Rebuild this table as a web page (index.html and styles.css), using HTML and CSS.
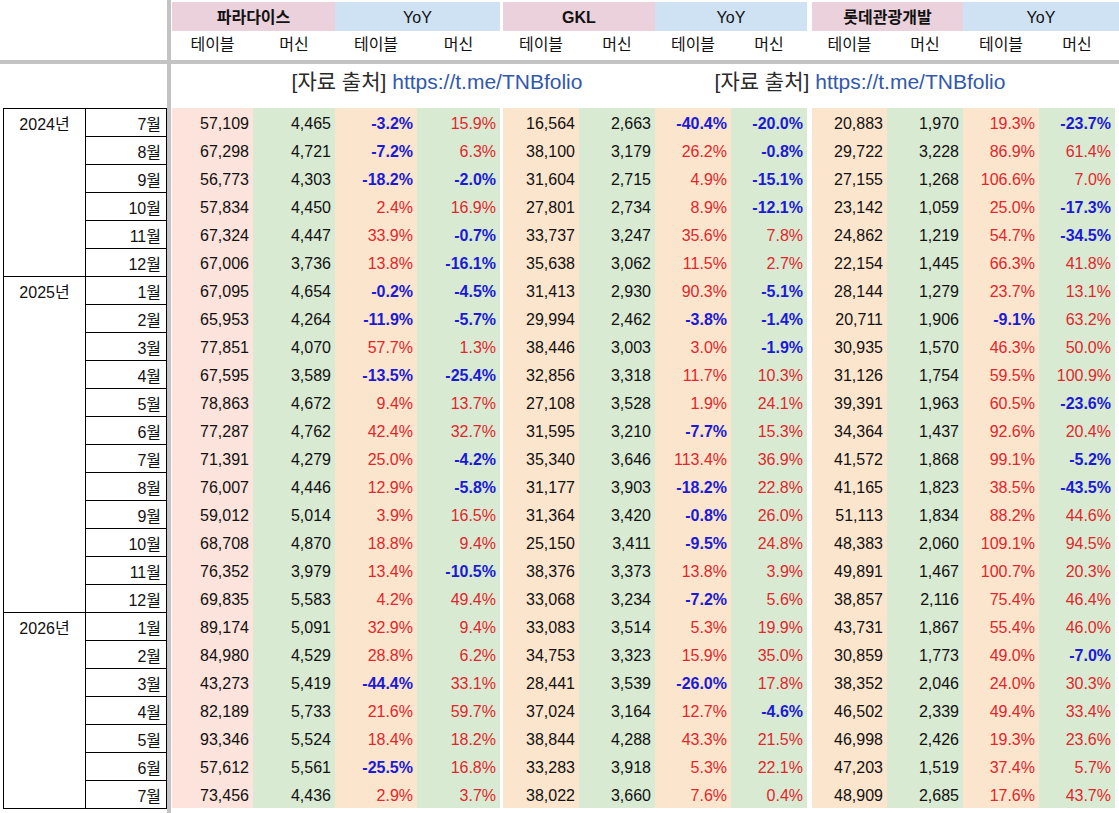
FILE: index.html
```html
<!DOCTYPE html>
<html lang="ko">
<head>
<meta charset="utf-8">
<title>카지노 드롭액</title>
<link rel="stylesheet" href="styles.css">
</head>
<body>
<div class="sheet">
  <div class="vbar"></div>
  <div class="hbar"></div>

  <div class="head">
    <div class="cols h1">
      <span class="pk g1">파라다이스</span>
      <span class="bl g2">YoY</span>
      <span class="pk g3">GKL</span>
      <span class="bl g4">YoY</span>
      <span class="pk g5">롯데관광개발</span>
      <span class="bl g6">YoY</span>
    </div>
    <div class="cols h2 r12">
      <span>테이블</span><span>머신</span><span>테이블</span><span>머신</span>
      <span>테이블</span><span>머신</span><span>테이블</span><span>머신</span>
      <span>테이블</span><span>머신</span><span>테이블</span><span>머신</span>
    </div>
  </div>

  <div class="source">
    <p class="src src-a"><span class="src-k">[자료 출처]</span> <span class="src-u">https://t.me/TNBfolio</span></p>
    <p class="src src-b"><span class="src-k">[자료 출처]</span> <span class="src-u">https://t.me/TNBfolio</span></p>
  </div>

  <div class="side">
    <div class="yr y24">2024년</div>
    <div class="mo">7월</div><div class="mo">8월</div><div class="mo">9월</div><div class="mo">10월</div><div class="mo">11월</div><div class="mo">12월</div>
    <div class="yr y25">2025년</div>
    <div class="mo">1월</div><div class="mo">2월</div><div class="mo">3월</div><div class="mo">4월</div><div class="mo">5월</div><div class="mo">6월</div>
    <div class="mo">7월</div><div class="mo">8월</div><div class="mo">9월</div><div class="mo">10월</div><div class="mo">11월</div><div class="mo">12월</div>
    <div class="yr y26">2026년</div>
    <div class="mo">1월</div><div class="mo">2월</div><div class="mo">3월</div><div class="mo">4월</div><div class="mo">5월</div><div class="mo">6월</div>
    <div class="mo last">7월</div>
  </div>

  <div class="data">
    <div class="cols r12 row"><span>57,109</span><span>4,465</span><span class="dn">-3.2%</span><span class="up">15.9%</span><span>16,564</span><span>2,663</span><span class="dn">-40.4%</span><span class="dn">-20.0%</span><span>20,883</span><span>1,970</span><span class="up">19.3%</span><span class="dn">-23.7%</span></div>
    <div class="cols r12 row"><span>67,298</span><span>4,721</span><span class="dn">-7.2%</span><span class="up">6.3%</span><span>38,100</span><span>3,179</span><span class="up">26.2%</span><span class="dn">-0.8%</span><span>29,722</span><span>3,228</span><span class="up">86.9%</span><span class="up">61.4%</span></div>
    <div class="cols r12 row"><span>56,773</span><span>4,303</span><span class="dn">-18.2%</span><span class="dn">-2.0%</span><span>31,604</span><span>2,715</span><span class="up">4.9%</span><span class="dn">-15.1%</span><span>27,155</span><span>1,268</span><span class="up">106.6%</span><span class="up">7.0%</span></div>
    <div class="cols r12 row"><span>57,834</span><span>4,450</span><span class="up">2.4%</span><span class="up">16.9%</span><span>27,801</span><span>2,734</span><span class="up">8.9%</span><span class="dn">-12.1%</span><span>23,142</span><span>1,059</span><span class="up">25.0%</span><span class="dn">-17.3%</span></div>
    <div class="cols r12 row"><span>67,324</span><span>4,447</span><span class="up">33.9%</span><span class="dn">-0.7%</span><span>33,737</span><span>3,247</span><span class="up">35.6%</span><span class="up">7.8%</span><span>24,862</span><span>1,219</span><span class="up">54.7%</span><span class="dn">-34.5%</span></div>
    <div class="cols r12 row"><span>67,006</span><span>3,736</span><span class="up">13.8%</span><span class="dn">-16.1%</span><span>35,638</span><span>3,062</span><span class="up">11.5%</span><span class="up">2.7%</span><span>22,154</span><span>1,445</span><span class="up">66.3%</span><span class="up">41.8%</span></div>
    <div class="cols r12 row"><span>67,095</span><span>4,654</span><span class="dn">-0.2%</span><span class="dn">-4.5%</span><span>31,413</span><span>2,930</span><span class="up">90.3%</span><span class="dn">-5.1%</span><span>28,144</span><span>1,279</span><span class="up">23.7%</span><span class="up">13.1%</span></div>
    <div class="cols r12 row"><span>65,953</span><span>4,264</span><span class="dn">-11.9%</span><span class="dn">-5.7%</span><span>29,994</span><span>2,462</span><span class="dn">-3.8%</span><span class="dn">-1.4%</span><span>20,711</span><span>1,906</span><span class="dn">-9.1%</span><span class="up">63.2%</span></div>
    <div class="cols r12 row"><span>77,851</span><span>4,070</span><span class="up">57.7%</span><span class="up">1.3%</span><span>38,446</span><span>3,003</span><span class="up">3.0%</span><span class="dn">-1.9%</span><span>30,935</span><span>1,570</span><span class="up">46.3%</span><span class="up">50.0%</span></div>
    <div class="cols r12 row"><span>67,595</span><span>3,589</span><span class="dn">-13.5%</span><span class="dn">-25.4%</span><span>32,856</span><span>3,318</span><span class="up">11.7%</span><span class="up">10.3%</span><span>31,126</span><span>1,754</span><span class="up">59.5%</span><span class="up">100.9%</span></div>
    <div class="cols r12 row"><span>78,863</span><span>4,672</span><span class="up">9.4%</span><span class="up">13.7%</span><span>27,108</span><span>3,528</span><span class="up">1.9%</span><span class="up">24.1%</span><span>39,391</span><span>1,963</span><span class="up">60.5%</span><span class="dn">-23.6%</span></div>
    <div class="cols r12 row"><span>77,287</span><span>4,762</span><span class="up">42.4%</span><span class="up">32.7%</span><span>31,595</span><span>3,210</span><span class="dn">-7.7%</span><span class="up">15.3%</span><span>34,364</span><span>1,437</span><span class="up">92.6%</span><span class="up">20.4%</span></div>
    <div class="cols r12 row"><span>71,391</span><span>4,279</span><span class="up">25.0%</span><span class="dn">-4.2%</span><span>35,340</span><span>3,646</span><span class="up">113.4%</span><span class="up">36.9%</span><span>41,572</span><span>1,868</span><span class="up">99.1%</span><span class="dn">-5.2%</span></div>
    <div class="cols r12 row"><span>76,007</span><span>4,446</span><span class="up">12.9%</span><span class="dn">-5.8%</span><span>31,177</span><span>3,903</span><span class="dn">-18.2%</span><span class="up">22.8%</span><span>41,165</span><span>1,823</span><span class="up">38.5%</span><span class="dn">-43.5%</span></div>
    <div class="cols r12 row"><span>59,012</span><span>5,014</span><span class="up">3.9%</span><span class="up">16.5%</span><span>31,364</span><span>3,420</span><span class="dn">-0.8%</span><span class="up">26.0%</span><span>51,113</span><span>1,834</span><span class="up">88.2%</span><span class="up">44.6%</span></div>
    <div class="cols r12 row"><span>68,708</span><span>4,870</span><span class="up">18.8%</span><span class="up">9.4%</span><span>25,150</span><span>3,411</span><span class="dn">-9.5%</span><span class="up">24.8%</span><span>48,383</span><span>2,060</span><span class="up">109.1%</span><span class="up">94.5%</span></div>
    <div class="cols r12 row"><span>76,352</span><span>3,979</span><span class="up">13.4%</span><span class="dn">-10.5%</span><span>38,376</span><span>3,373</span><span class="up">13.8%</span><span class="up">3.9%</span><span>49,891</span><span>1,467</span><span class="up">100.7%</span><span class="up">20.3%</span></div>
    <div class="cols r12 row"><span>69,835</span><span>5,583</span><span class="up">4.2%</span><span class="up">49.4%</span><span>33,068</span><span>3,234</span><span class="dn">-7.2%</span><span class="up">5.6%</span><span>38,857</span><span>2,116</span><span class="up">75.4%</span><span class="up">46.4%</span></div>
    <div class="cols r12 row"><span>89,174</span><span>5,091</span><span class="up">32.9%</span><span class="up">9.4%</span><span>33,083</span><span>3,514</span><span class="up">5.3%</span><span class="up">19.9%</span><span>43,731</span><span>1,867</span><span class="up">55.4%</span><span class="up">46.0%</span></div>
    <div class="cols r12 row"><span>84,980</span><span>4,529</span><span class="up">28.8%</span><span class="up">6.2%</span><span>34,753</span><span>3,323</span><span class="up">15.9%</span><span class="up">35.0%</span><span>30,859</span><span>1,773</span><span class="up">49.0%</span><span class="dn">-7.0%</span></div>
    <div class="cols r12 row"><span>43,273</span><span>5,419</span><span class="dn">-44.4%</span><span class="up">33.1%</span><span>28,441</span><span>3,539</span><span class="dn">-26.0%</span><span class="up">17.8%</span><span>38,352</span><span>2,046</span><span class="up">24.0%</span><span class="up">30.3%</span></div>
    <div class="cols r12 row"><span>82,189</span><span>5,733</span><span class="up">21.6%</span><span class="up">59.7%</span><span>37,024</span><span>3,164</span><span class="up">12.7%</span><span class="dn">-4.6%</span><span>46,502</span><span>2,339</span><span class="up">49.4%</span><span class="up">33.4%</span></div>
    <div class="cols r12 row"><span>93,346</span><span>5,524</span><span class="up">18.4%</span><span class="up">18.2%</span><span>38,844</span><span>4,288</span><span class="up">43.3%</span><span class="up">21.5%</span><span>46,998</span><span>2,426</span><span class="up">19.3%</span><span class="up">23.6%</span></div>
    <div class="cols r12 row"><span>57,612</span><span>5,561</span><span class="dn">-25.5%</span><span class="up">16.8%</span><span>33,283</span><span>3,918</span><span class="up">5.3%</span><span class="up">22.1%</span><span>47,203</span><span>1,519</span><span class="up">37.4%</span><span class="up">5.7%</span></div>
    <div class="cols r12 row"><span>73,456</span><span>4,436</span><span class="up">2.9%</span><span class="up">3.7%</span><span>38,022</span><span>3,660</span><span class="up">7.6%</span><span class="up">0.4%</span><span>48,909</span><span>2,685</span><span class="up">17.6%</span><span class="up">43.7%</span></div>
  </div>
</div>
</body>
</html>
```

FILE: styles.css
```css
* {
  box-sizing: border-box;
  margin: 0;
  padding: 0;
}

html, body {
  background: #ffffff;
}

body {
  margin: 0;
  font-family: "Liberation Sans", Arial, "Noto Sans CJK KR", sans-serif;
  font-size: 16px;
  color: #111111;
}

.sheet {
  display: grid;
  grid-template-columns: 167px 4px 1px 947px;
  grid-template-rows: 60px 4px 44px 1fr;
  width: 1119px;
  height: 813px;
  overflow: hidden;
}

.vbar {
  grid-column: 2;
  grid-row: 1 / -1;
  background: #c3c3c3;
}

.hbar {
  grid-column: 1 / -1;
  grid-row: 2;
  background: #c3c3c3;
}

/* shared column template for header and data */
.cols {
  display: grid;
  grid-template-columns: 81px 82px 82px 83px 3px 76px 76px 76px 76px 5px 75px 76px 76px 76px 4px;
}

.r12 > :nth-child(5) { grid-column: 6; }
.r12 > :nth-child(9) { grid-column: 11; }

/* header */
.head {
  grid-column: 4;
  grid-row: 1;
  padding-top: 2px;
}

.h1 {
  height: 29px;
}

.h1 > span {
  padding-top: 2px;
  line-height: 27px;
  text-align: center;
  white-space: nowrap;
}

.pk {
  background: #ead1dc;
  font-weight: bold;
}

.bl {
  background: #cfe2f3;
}

.g1 { grid-column: 1 / 3; }
.g2 { grid-column: 3 / 5; }
.g3 { grid-column: 6 / 8; }
.g4 { grid-column: 8 / 10; }
.g5 { grid-column: 11 / 13; }
.g6 { grid-column: 13 / 16; }

.h2 {
  height: 28px;
}

.h2 > span {
  line-height: 28px;
  text-align: center;
  white-space: nowrap;
}

/* source line */
.source {
  grid-column: 4;
  grid-row: 3;
  display: flex;
}

.src {
  font-size: 21px;
  line-height: 36px;
  text-align: center;
  white-space: nowrap;
}

.src-a { width: 530px; }
.src-b { width: 316px; }

.src-k { color: #2a2a2a; }
.src-u { color: #3158ad; }

/* left year/month table */
.side {
  grid-column: 1;
  grid-row: 4;
  display: grid;
  grid-template-columns: 83px 81px;
  grid-template-rows: repeat(24, 28px) 29px;
  align-content: start;
  padding-left: 3px;
}

.yr {
  grid-column: 1;
  border: 1px solid #000;
  border-bottom: none;
  text-align: center;
  padding-top: 4px;
  line-height: 23px;
}

.y24 { grid-row: 1 / 7; }
.y25 { grid-row: 7 / 19; }
.y26 { grid-row: 19 / 26; border-bottom: 1px solid #000; }

.mo {
  grid-column: 2;
  border-top: 1px solid #000;
  border-right: 1px solid #000;
  text-align: right;
  padding-right: 5px;
  padding-top: 4px;
  line-height: 23px;
}

.mo.last {
  border-bottom: 1px solid #000;
}

/* data */
.data {
  grid-column: 4;
  grid-row: 4;
}

.row {
  height: 28px;
}

.row > span {
  padding-top: 4px;
  line-height: 24px;
  text-align: right;
  padding-right: 4px;
  white-space: nowrap;
}

.row > :nth-child(odd) { background: #fce5cd; }
.row > :nth-child(even) { background: #d9ead3; }
.row > :first-child { background: #fce3db; }

.up {
  color: #e3262b;
}

.dn {
  color: #1a1ad8;
  font-weight: bold;
}
```
